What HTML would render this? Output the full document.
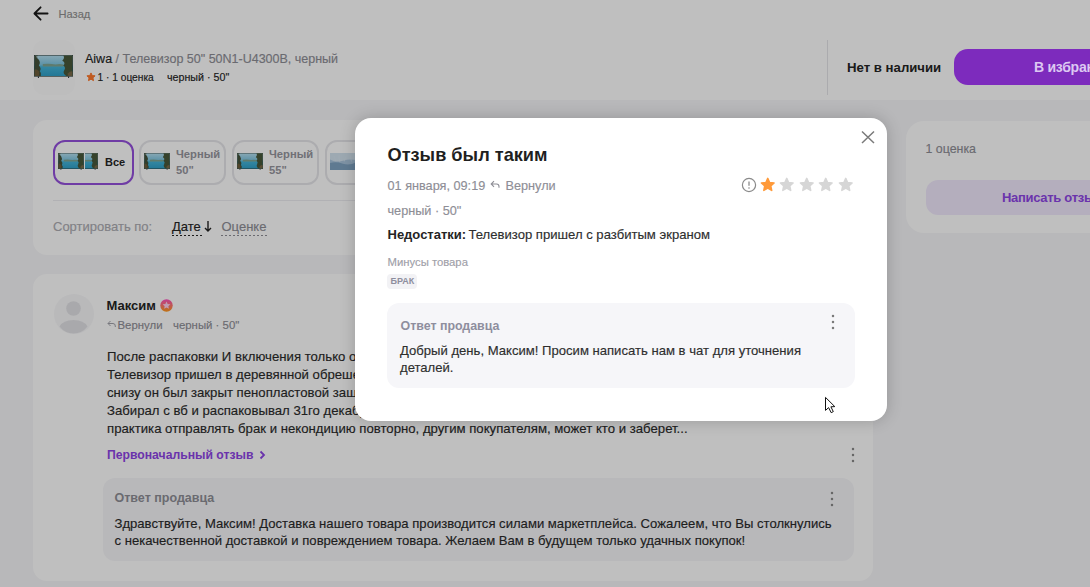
<!DOCTYPE html><html><head><meta charset="utf-8"><style>
html,body{margin:0;padding:0;width:1090px;height:587px;overflow:hidden;background:#f6f6f8;font-family:"Liberation Sans",sans-serif;}
.t{position:absolute;line-height:1;white-space:nowrap;-webkit-text-stroke:0.15px currentColor;}
.b{-webkit-text-stroke:0;}
.a{position:absolute;display:block;}
.box{position:absolute;}
</style></head><body>
<div class="box" style="left:0;top:0;width:1090px;height:100px;background:#ffffff"></div><svg class="a" style="left:32px;top:5px" width="18" height="17" viewBox="0 0 18 17"><path d="M15.6 8.5H2.6M8.6 2.3 L2.4 8.5 L8.6 14.7" fill="none" stroke="#1a1a1a" stroke-width="1.8" stroke-linecap="round" stroke-linejoin="round"/></svg><div class="t" style="left:58.5px;top:8.60px;font-size:11.1px;color:#919191;font-weight:400;">Назад</div>
<div class="box" style="left:33px;top:40px;width:42px;height:55px;border-radius:12px;background:#fcfcfd"></div><svg class="a" style="left:34px;top:55px" width="39" height="23" viewBox="0 0 40 24" preserveAspectRatio="none">
<defs><linearGradient id="stv34_55" x1="0" y1="0" x2="0" y2="1"><stop offset="0" stop-color="#b5e0f0"/><stop offset="0.45" stop-color="#7cc4e0"/><stop offset="0.55" stop-color="#44b4d8"/><stop offset="1" stop-color="#2fa0c8"/></linearGradient></defs>
<rect x="0" y="0" width="40" height="22.5" fill="#1a2018"/>
<rect x="0.6" y="0.5" width="38.8" height="21.5" fill="url(#stv34_55)"/>
<path d="M9 9.5Q16 8.5 22 10Q26 9 30 10L30 12L9 12Z" fill="#7fa592"/>
<path d="M0.6 0.5H4Q2 3 5 5Q7 8 5 11Q8 14 6 17Q8 19 7 22H0.6Z" fill="#44523a"/>
<path d="M0.6 15Q3 14 5 17Q6 19 5 22H0.6Z" fill="#6e5c3a"/>
<path d="M39.4 0.5H30Q32 3 29 6Q33 8 30 11Q33 13 31 16Q29 19 33 22H39.4Z" fill="#48583a"/>
<path d="M39.4 17Q36 17 35 19Q34 21 35 22H39.4Z" fill="#7a6a48"/>
<path d="M2 2Q4 1 5 3" stroke="#cfe3e8" stroke-width="0.8" fill="none"/>
<rect x="4" y="22.5" width="1" height="1.5" fill="#222"/><rect x="35" y="22.5" width="1" height="1.5" fill="#222"/>
</svg><div class="t" style="left:85px;top:52.82px;font-size:12.5px;color:#8e8e96;font-weight:400;"><span style="color:#242424">Aiwa</span> / Телевизор 50" 50N1-U4300B, черный</div>
<svg class="a" style="left:85.5px;top:71.5px" width="10" height="10" viewBox="0 0 24 24"><path d="M12 2.2l2.9 6.3 6.9.75-5.15 4.65 1.45 6.8L12 17.2l-6.1 3.5 1.45-6.8L2.2 9.25l6.9-.75z" fill="#ff7a2e" stroke="#ff7a2e" stroke-width="2.4" stroke-linejoin="round"/></svg><div class="t" style="left:97.5px;top:72.57px;font-size:10.2px;color:#242424;font-weight:400;">1 · 1 оценка</div>
<div class="t" style="left:167px;top:72.14px;font-size:10.7px;color:#242424;font-weight:400;">черный · 50"</div>
<div class="box" style="left:827px;top:40px;width:1px;height:55px;background:#e4e4e8"></div><div class="t b" style="left:847px;top:61.13px;font-size:13.2px;color:#242424;font-weight:700;">Нет в наличии</div>
<div class="box" style="left:954px;top:49px;width:200px;height:36px;border-radius:14px;background:#a73afd"></div><div class="box" style="left:33px;top:120px;width:840px;height:135px;border-radius:14px;background:#ffffff"></div><div class="box" style="left:53px;top:140px;width:77px;height:41px;border-radius:12px;border:2px solid #9450dc"></div><svg class="a" style="left:58px;top:153px" width="26" height="17" viewBox="0 0 40 24" preserveAspectRatio="none">
<defs><linearGradient id="stv58_153" x1="0" y1="0" x2="0" y2="1"><stop offset="0" stop-color="#b5e0f0"/><stop offset="0.45" stop-color="#7cc4e0"/><stop offset="0.55" stop-color="#44b4d8"/><stop offset="1" stop-color="#2fa0c8"/></linearGradient></defs>
<rect x="0" y="0" width="40" height="22.5" fill="#1a2018"/>
<rect x="0.6" y="0.5" width="38.8" height="21.5" fill="url(#stv58_153)"/>
<path d="M9 9.5Q16 8.5 22 10Q26 9 30 10L30 12L9 12Z" fill="#7fa592"/>
<path d="M0.6 0.5H4Q2 3 5 5Q7 8 5 11Q8 14 6 17Q8 19 7 22H0.6Z" fill="#44523a"/>
<path d="M0.6 15Q3 14 5 17Q6 19 5 22H0.6Z" fill="#6e5c3a"/>
<path d="M39.4 0.5H30Q32 3 29 6Q33 8 30 11Q33 13 31 16Q29 19 33 22H39.4Z" fill="#48583a"/>
<path d="M39.4 17Q36 17 35 19Q34 21 35 22H39.4Z" fill="#7a6a48"/>
<path d="M2 2Q4 1 5 3" stroke="#cfe3e8" stroke-width="0.8" fill="none"/>
<rect x="4" y="22.5" width="1" height="1.5" fill="#222"/><rect x="35" y="22.5" width="1" height="1.5" fill="#222"/>
</svg><div class="box" style="left:85px;top:153px;width:13px;height:17px;overflow:hidden"><svg class="a" style="left:-13px;top:0px" width="26" height="17" viewBox="0 0 40 24" preserveAspectRatio="none">
<defs><linearGradient id="stv-13_0" x1="0" y1="0" x2="0" y2="1"><stop offset="0" stop-color="#b5e0f0"/><stop offset="0.45" stop-color="#7cc4e0"/><stop offset="0.55" stop-color="#44b4d8"/><stop offset="1" stop-color="#2fa0c8"/></linearGradient></defs>
<rect x="0" y="0" width="40" height="22.5" fill="#1a2018"/>
<rect x="0.6" y="0.5" width="38.8" height="21.5" fill="url(#stv-13_0)"/>
<path d="M9 9.5Q16 8.5 22 10Q26 9 30 10L30 12L9 12Z" fill="#7fa592"/>
<path d="M0.6 0.5H4Q2 3 5 5Q7 8 5 11Q8 14 6 17Q8 19 7 22H0.6Z" fill="#44523a"/>
<path d="M0.6 15Q3 14 5 17Q6 19 5 22H0.6Z" fill="#6e5c3a"/>
<path d="M39.4 0.5H30Q32 3 29 6Q33 8 30 11Q33 13 31 16Q29 19 33 22H39.4Z" fill="#48583a"/>
<path d="M39.4 17Q36 17 35 19Q34 21 35 22H39.4Z" fill="#7a6a48"/>
<path d="M2 2Q4 1 5 3" stroke="#cfe3e8" stroke-width="0.8" fill="none"/>
<rect x="4" y="22.5" width="1" height="1.5" fill="#222"/><rect x="35" y="22.5" width="1" height="1.5" fill="#222"/>
</svg></div><div class="t b" style="left:105px;top:157.19px;font-size:11px;color:#242424;font-weight:700;">Все</div>
<div class="box" style="left:139px;top:140px;width:83px;height:41px;border-radius:12px;border:2px solid #e6e6ea"></div><svg class="a" style="left:144px;top:153px" width="26" height="17" viewBox="0 0 40 24" preserveAspectRatio="none">
<defs><linearGradient id="stv144_153" x1="0" y1="0" x2="0" y2="1"><stop offset="0" stop-color="#b5e0f0"/><stop offset="0.45" stop-color="#7cc4e0"/><stop offset="0.55" stop-color="#44b4d8"/><stop offset="1" stop-color="#2fa0c8"/></linearGradient></defs>
<rect x="0" y="0" width="40" height="22.5" fill="#1a2018"/>
<rect x="0.6" y="0.5" width="38.8" height="21.5" fill="url(#stv144_153)"/>
<path d="M9 9.5Q16 8.5 22 10Q26 9 30 10L30 12L9 12Z" fill="#7fa592"/>
<path d="M0.6 0.5H4Q2 3 5 5Q7 8 5 11Q8 14 6 17Q8 19 7 22H0.6Z" fill="#44523a"/>
<path d="M0.6 15Q3 14 5 17Q6 19 5 22H0.6Z" fill="#6e5c3a"/>
<path d="M39.4 0.5H30Q32 3 29 6Q33 8 30 11Q33 13 31 16Q29 19 33 22H39.4Z" fill="#48583a"/>
<path d="M39.4 17Q36 17 35 19Q34 21 35 22H39.4Z" fill="#7a6a48"/>
<path d="M2 2Q4 1 5 3" stroke="#cfe3e8" stroke-width="0.8" fill="none"/>
<rect x="4" y="22.5" width="1" height="1.5" fill="#222"/><rect x="35" y="22.5" width="1" height="1.5" fill="#222"/>
</svg><div class="t b" style="left:176px;top:149.22px;font-size:11.2px;color:#96969e;font-weight:700;">Черный</div>
<div class="t b" style="left:176px;top:165.32px;font-size:11.2px;color:#96969e;font-weight:700;">50"</div>
<div class="box" style="left:232px;top:140px;width:83px;height:41px;border-radius:12px;border:2px solid #e6e6ea"></div><svg class="a" style="left:237px;top:153px" width="26" height="17" viewBox="0 0 40 24" preserveAspectRatio="none">
<defs><linearGradient id="stv237_153" x1="0" y1="0" x2="0" y2="1"><stop offset="0" stop-color="#b5e0f0"/><stop offset="0.45" stop-color="#7cc4e0"/><stop offset="0.55" stop-color="#44b4d8"/><stop offset="1" stop-color="#2fa0c8"/></linearGradient></defs>
<rect x="0" y="0" width="40" height="22.5" fill="#1a2018"/>
<rect x="0.6" y="0.5" width="38.8" height="21.5" fill="url(#stv237_153)"/>
<path d="M9 9.5Q16 8.5 22 10Q26 9 30 10L30 12L9 12Z" fill="#7fa592"/>
<path d="M0.6 0.5H4Q2 3 5 5Q7 8 5 11Q8 14 6 17Q8 19 7 22H0.6Z" fill="#44523a"/>
<path d="M0.6 15Q3 14 5 17Q6 19 5 22H0.6Z" fill="#6e5c3a"/>
<path d="M39.4 0.5H30Q32 3 29 6Q33 8 30 11Q33 13 31 16Q29 19 33 22H39.4Z" fill="#48583a"/>
<path d="M39.4 17Q36 17 35 19Q34 21 35 22H39.4Z" fill="#7a6a48"/>
<path d="M2 2Q4 1 5 3" stroke="#cfe3e8" stroke-width="0.8" fill="none"/>
<rect x="4" y="22.5" width="1" height="1.5" fill="#222"/><rect x="35" y="22.5" width="1" height="1.5" fill="#222"/>
</svg><div class="t b" style="left:269px;top:149.22px;font-size:11.2px;color:#96969e;font-weight:700;">Черный</div>
<div class="t b" style="left:269px;top:165.32px;font-size:11.2px;color:#96969e;font-weight:700;">55"</div>
<div class="box" style="left:325px;top:140px;width:83px;height:41px;border-radius:12px;border:2px solid #e6e6ea"></div><svg class="a" style="left:330px;top:153px" width="26" height="17" viewBox="0 0 40 24" preserveAspectRatio="none">
<rect x="0" y="0" width="40" height="24" fill="#a9c4dc"/>
<path d="M0 0H40V10Q30 8 20 11T0 9Z" fill="#d2e2ee"/>
<path d="M0 14Q10 12 20 15T40 13V24H0Z" fill="#7fa3c2"/>
<path d="M6 4L9 12M14 3L15 13M24 5L22 12M31 3L33 12" stroke="#d9e6f0" stroke-width="0.8"/>
</svg><div class="box" style="left:53px;top:200px;width:800px;height:1px;background:#ececf0"></div><div class="t" style="left:53px;top:220.20px;font-size:13px;color:#acacb2;font-weight:400;">Сортировать по:</div>
<div class="t" style="left:172px;top:220.20px;font-size:13px;color:#242424;font-weight:400;">Дате</div>
<svg class="a" style="left:204px;top:220px" width="8" height="12" viewBox="0 0 8 12"><path d="M4 1V11M1 8L4 11L7 8" fill="none" stroke="#242424" stroke-width="1.4"/></svg><svg class="a" style="left:172px;top:234.8px" width="32" height="2"><line x1="0" y1="0.5" x2="32" y2="0.5" stroke="#242424" stroke-width="1" stroke-dasharray="2 2"/></svg><div class="t" style="left:221.5px;top:220.20px;font-size:13px;color:#8e8e96;font-weight:400;">Оценке</div>
<svg class="a" style="left:221px;top:234.8px" width="46" height="2"><line x1="0" y1="0.5" x2="46" y2="0.5" stroke="#8e8e96" stroke-width="1" stroke-dasharray="2 2"/></svg><div class="box" style="left:906px;top:121px;width:300px;height:112px;border-radius:18px;background:#ffffff"></div><div class="t" style="left:925.5px;top:143.00px;font-size:12.4px;color:#8e8e96;font-weight:400;">1 оценка</div>
<div class="box" style="left:926px;top:180px;width:300px;height:35px;border-radius:12px;background:#f1e9fd"></div><div class="t b" style="left:1002px;top:190.80px;font-size:13px;color:#8e45e6;font-weight:700;letter-spacing:-0.3px">Написать отзыв</div>
<div class="box" style="left:33px;top:274px;width:840px;height:307px;border-radius:14px;background:#ffffff"></div><svg class="a" style="left:54px;top:294px" width="40" height="40" viewBox="0 0 40 40"><circle cx="20" cy="20" r="20" fill="#f7f7f9"/><circle cx="19.5" cy="14.5" r="7.3" fill="#e2e2e6"/><path d="M5.5 32.5 Q9 26 19.5 26 Q30 26 33.5 32.5 Q28 39.5 19.5 39.5 Q11 39.5 5.5 32.5Z" fill="#e2e2e6"/></svg><div class="t b" style="left:106.5px;top:298.50px;font-size:13px;color:#242424;font-weight:700;">Максим</div>
<svg class="a" style="left:160px;top:299px" width="13" height="13" viewBox="0 0 13 13"><defs><linearGradient id="g1" x1="0" y1="0" x2="0" y2="1"><stop offset="0" stop-color="#ff4fc0"/><stop offset="1" stop-color="#ff9a1a"/></linearGradient></defs><circle cx="6.5" cy="6.5" r="6.2" fill="url(#g1)"/><path d="M6.5 2.6l1.15 2.45 2.7.3-2 1.85.55 2.65-2.4-1.35-2.4 1.35.55-2.65-2-1.85 2.7-.3z" fill="#ffd0ee"/></svg><svg class="a" style="left:107px;top:320px" width="9" height="8" viewBox="0 0 9 8"><path d="M3.5 1L1 3.5L3.5 6M1 3.5H6Q8.3 3.5 8.3 6V7" fill="none" stroke="#a0a0a8" stroke-width="1"/></svg><div class="t" style="left:117.5px;top:319.85px;font-size:11.4px;color:#8e8e96;font-weight:400;">Вернули</div>
<div class="t" style="left:173px;top:319.85px;font-size:11.4px;color:#8e8e96;font-weight:400;">черный · 50"</div>
<div class="t" style="left:107px;top:350.34px;font-size:13.18px;color:#2a2a2a;font-weight:400;">После распаковки И включения только от</div>
<div class="t" style="left:107px;top:368.34px;font-size:13.18px;color:#2a2a2a;font-weight:400;">Телевизор пришел в деревянной обрешетке</div>
<div class="t" style="left:107px;top:386.34px;font-size:13.18px;color:#2a2a2a;font-weight:400;">снизу он был закрыт пенопластовой защитой</div>
<div class="t" style="left:107px;top:404.34px;font-size:13.18px;color:#2a2a2a;font-weight:400;">Забирал с вб и распаковывал 31го декабря</div>
<div class="t" style="left:107px;top:422.34px;font-size:13.18px;color:#2a2a2a;font-weight:400;">практика отправлять брак и некондицию повторно, другим покупателям, может кто и заберет...</div>
<div class="t b" style="left:107px;top:449.17px;font-size:12.2px;color:#8e45e6;font-weight:700;">Первоначальный отзыв</div>
<svg class="a" style="left:258px;top:450px" width="8" height="10" viewBox="0 0 8 10"><path d="M2.5 1.5L6 5L2.5 8.5" fill="none" stroke="#8e45e6" stroke-width="1.8"/></svg><svg class="a" style="left:849.5px;top:446px" width="6" height="18" viewBox="0 0 6 18"><circle cx="3" cy="3" r="1.25" fill="#8a8a8a"/><circle cx="3" cy="9" r="1.25" fill="#8a8a8a"/><circle cx="3" cy="15" r="1.25" fill="#8a8a8a"/></svg><div class="box" style="left:103px;top:478px;width:751px;height:83px;border-radius:12px;background:#f6f6f9"></div><div class="t b" style="left:114.5px;top:492.42px;font-size:12.5px;color:#8e8e96;font-weight:700;">Ответ продавца</div>
<svg class="a" style="left:829px;top:489.5px" width="6" height="18" viewBox="0 0 6 18"><circle cx="3" cy="3" r="1.25" fill="#8a8a8a"/><circle cx="3" cy="9" r="1.25" fill="#8a8a8a"/><circle cx="3" cy="15" r="1.25" fill="#8a8a8a"/></svg><div class="t" style="left:114.5px;top:516.91px;font-size:13.1px;color:#2a2a2a;font-weight:400;">Здравствуйте, Максим! Доставка нашего товара производится силами маркетплейса. Сожалеем, что Вы столкнулись</div>
<div class="t" style="left:114.5px;top:534.41px;font-size:13.1px;color:#2a2a2a;font-weight:400;">с некачественной доставкой и повреждением товара. Желаем Вам в будущем только удачных покупок!</div>
<div class="box" style="left:0;top:0;width:1090px;height:587px;background:rgba(0,0,0,0.25)"></div><div class="t b" style="left:1034px;top:60.15px;font-size:14px;color:#dcc8f2;font-weight:700;letter-spacing:-0.25px">В избранное</div>
<div class="box" style="left:355px;top:118px;width:532px;height:303px;border-radius:16px;background:#ffffff;box-shadow:0 0 16px rgba(0,0,0,0.2)"></div><svg class="a" style="left:860px;top:129px" width="16" height="16" viewBox="0 0 16 16"><path d="M2 2.5L14 14M14 2.5L2 14" fill="none" stroke="#7a7a7a" stroke-width="1.5"/></svg><div class="t b" style="left:387.5px;top:146.09px;font-size:18.2px;color:#1f1f1f;font-weight:700;">Отзыв был таким</div>
<div class="t" style="left:387.5px;top:179.85px;font-size:12.7px;color:#8e8e96;font-weight:400;">01 января, 09:19</div>
<svg class="a" style="left:490px;top:180px" width="10" height="9" viewBox="0 0 10 9"><path d="M4 1.2L1.2 4L4 6.8M1.2 4H6.5Q9 4 9 6.5V7.8" fill="none" stroke="#8e8e96" stroke-width="1.1"/></svg><div class="t" style="left:505.5px;top:179.85px;font-size:12.7px;color:#8e8e96;font-weight:400;">Вернули</div>
<div class="t" style="left:387.5px;top:204.95px;font-size:12.7px;color:#8e8e96;font-weight:400;">черный · 50"</div>
<div class="t b" style="left:387.5px;top:228.00px;font-size:13px;color:#242424;font-weight:700;">Недостатки:</div>
<div class="t" style="left:468.5px;top:227.91px;font-size:13.1px;color:#2e2e2e;font-weight:400;">Телевизор пришел с разбитым экраном</div>
<div class="t" style="left:387.5px;top:256.63px;font-size:11.3px;color:#a0a0a8;font-weight:400;">Минусы товара</div>
<div class="box" style="left:387px;top:274px;width:30px;height:15px;border-radius:4px;background:#f2f2f5"></div><div class="t b" style="left:390.5px;top:277.08px;font-size:9px;color:#8e8e9e;font-weight:700;">БРАК</div>
<svg class="a" style="left:741px;top:177px" width="16" height="16" viewBox="0 0 16 16"><circle cx="8" cy="8" r="6.6" fill="none" stroke="#8a8a8a" stroke-width="1.2"/><path d="M8 4.6V8.8" stroke="#8a8a8a" stroke-width="1.3"/><circle cx="8" cy="11" r="0.8" fill="#8a8a8a"/></svg><svg class="a" style="left:759.8px;top:177px" width="15.5" height="15.5" viewBox="0 0 24 24"><path d="M12 2.2l2.9 6.3 6.9.75-5.15 4.65 1.45 6.8L12 17.2l-6.1 3.5 1.45-6.8L2.2 9.25l6.9-.75z" fill="#ff9a3a" stroke="#ff9a3a" stroke-width="2.4" stroke-linejoin="round"/></svg><svg class="a" style="left:779.3px;top:177px" width="15.5" height="15.5" viewBox="0 0 24 24"><path d="M12 2.2l2.9 6.3 6.9.75-5.15 4.65 1.45 6.8L12 17.2l-6.1 3.5 1.45-6.8L2.2 9.25l6.9-.75z" fill="#d6d6d6" stroke="#d6d6d6" stroke-width="2.4" stroke-linejoin="round"/></svg><svg class="a" style="left:798.8px;top:177px" width="15.5" height="15.5" viewBox="0 0 24 24"><path d="M12 2.2l2.9 6.3 6.9.75-5.15 4.65 1.45 6.8L12 17.2l-6.1 3.5 1.45-6.8L2.2 9.25l6.9-.75z" fill="#d6d6d6" stroke="#d6d6d6" stroke-width="2.4" stroke-linejoin="round"/></svg><svg class="a" style="left:818.3px;top:177px" width="15.5" height="15.5" viewBox="0 0 24 24"><path d="M12 2.2l2.9 6.3 6.9.75-5.15 4.65 1.45 6.8L12 17.2l-6.1 3.5 1.45-6.8L2.2 9.25l6.9-.75z" fill="#d6d6d6" stroke="#d6d6d6" stroke-width="2.4" stroke-linejoin="round"/></svg><svg class="a" style="left:837.8px;top:177px" width="15.5" height="15.5" viewBox="0 0 24 24"><path d="M12 2.2l2.9 6.3 6.9.75-5.15 4.65 1.45 6.8L12 17.2l-6.1 3.5 1.45-6.8L2.2 9.25l6.9-.75z" fill="#d6d6d6" stroke="#d6d6d6" stroke-width="2.4" stroke-linejoin="round"/></svg><div class="box" style="left:387px;top:303px;width:468px;height:85px;border-radius:12px;background:#f6f6f9"></div><div class="t b" style="left:400.5px;top:319.50px;font-size:12.4px;color:#8e8e9e;font-weight:700;">Ответ продавца</div>
<svg class="a" style="left:830px;top:313px" width="6" height="18" viewBox="0 0 6 18"><circle cx="3" cy="3" r="1.25" fill="#7a7a7a"/><circle cx="3" cy="9" r="1.25" fill="#7a7a7a"/><circle cx="3" cy="15" r="1.25" fill="#7a7a7a"/></svg><div class="t" style="left:400px;top:343.51px;font-size:13.1px;color:#2e2e2e;font-weight:400;">Добрый день, Максим! Просим написать нам в чат для уточнения</div>
<div class="t" style="left:400px;top:360.61px;font-size:13.1px;color:#2e2e2e;font-weight:400;">деталей.</div>
<svg class="a" style="left:820px;top:393px" width="20" height="24" viewBox="820 393 20 24"><path d="M825.5 397.4 L825.5 410.4 L828.6 407.6 L831.2 412.7 L833.3 411.6 L830.9 406.8 L834.8 406.6 Z" fill="#fff" stroke="#111" stroke-width="1" stroke-linejoin="round"/></svg></body></html>
